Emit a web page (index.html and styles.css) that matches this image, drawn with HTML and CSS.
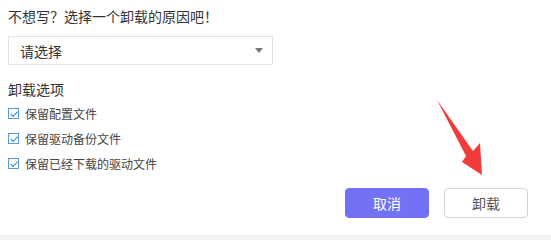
FILE: index.html
```html
<!DOCTYPE html>
<html lang="zh-CN">
<head>
    <meta charset="UTF-8">
    <meta name="viewport" content="width=device-width, initial-scale=1.0">
    <title>卸载</title>
    <link rel="stylesheet" href="styles.css">
</head>
<body>

<div class="dialog">
    <div class="title">不想写？选择一个卸载的原因吧！</div>
    <div class="select">
        <span>请选择</span>
        <span class="caret"></span>
    </div>

    <div class="section">卸载选项</div>
    <label class="check"><span class="box"></span>保留配置文件</label>
    <label class="check"><span class="box"></span>保留驱动备份文件</label>
    <label class="check"><span class="box"></span>保留已经下载的驱动文件</label>

    <div class="actions">
        <button class="btn primary">取消</button>
        <button class="btn">卸载</button>
    </div>
</div>
<div class="footer"></div>

<!-- 红色箭头标注 -->
<svg class="pointer" width="551" height="240" viewBox="0 0 551 240">
    <polygon points="437,100 473,151 480,143 482,175 462,162 466,156" fill="#f23b3b"/>
</svg>

</body>
</html>
```

FILE: styles.css
```css
body {
    margin: 0;
    background-color: #fff;
    font-family: "Noto Sans CJK SC", "Noto Sans", sans-serif;
    color: #333;
    position: relative;
    width: 551px;
    height: 240px;
    overflow: hidden;
}
.dialog {
    padding: 6px 23px 0 8px;
    display: flex;
    flex-direction: column;
}
.title {
    font-size: 14px;
    line-height: 20px;
}
.select {
    margin-top: 10px;
    width: 265px;
    height: 29px;
    box-sizing: border-box;
    border: 1px solid #e3e3e3;
    padding: 0 9px 0 11px;
    display: flex;
    align-items: center;
    justify-content: space-between;
    font-size: 14px;
}
.caret {
    width: 0;
    height: 0;
    border-left: 4px solid transparent;
    border-right: 4px solid transparent;
    border-top: 5px solid #777;
}
.section {
    margin-top: 14px;
    font-size: 14px;
    line-height: 20px;
    margin-bottom: 2px;
}
.check {
    display: flex;
    align-items: center;
    height: 25px;
    font-size: 12px;
    color: #444;
}
.check .box {
    width: 9px;
    height: 9px;
    border: 1px solid #5b9bd5;
    margin-right: 6px;
    position: relative;
}
.check .box::after {
    content: "";
    position: absolute;
    left: 1px;
    top: 0px;
    width: 6px;
    height: 3px;
    border-left: 1px solid #3d85c6;
    border-bottom: 1px solid #3d85c6;
    transform: rotate(-45deg) translate(-1px, 2px);
}
.actions {
    margin-top: 12px;
    display: flex;
    justify-content: flex-end;
    gap: 15px;
}
.btn {
    width: 84px;
    height: 30px;
    border: 1px solid #d3d3d3;
    border-radius: 4px;
    background-color: #fff;
    color: #555;
    font-family: inherit;
    font-size: 14px;
    cursor: pointer;
}
.btn.primary {
    background-color: #7372f7;
    border-color: #7372f7;
    color: #fff;
}
.footer {
    margin-top: 17px;
    height: 5px;
    background-color: #f3f3f3;
}
.pointer {
    position: absolute;
    left: 0;
    top: 0;
    pointer-events: none;
}
```
